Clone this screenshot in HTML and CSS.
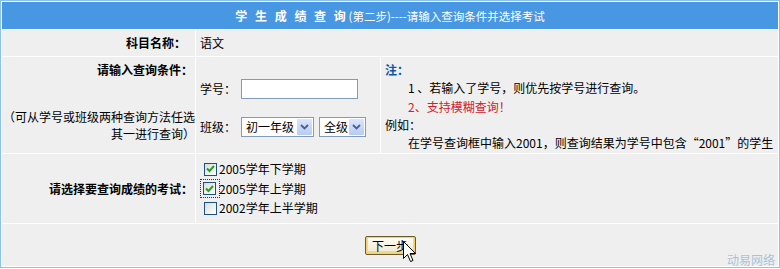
FILE: index.html
```html
<!DOCTYPE html>
<html lang="zh-CN">
<head>
  <meta charset="UTF-8">
  <title>学生成绩查询</title>
  <link rel="stylesheet" href="styles.css">
</head>
<body>
  <div class="page">
    <table class="query">
      <colgroup>
        <col class="col-label">
        <col class="col-fields">
        <col class="col-notes">
      </colgroup>
      <tr class="row-title">
        <th colspan="3"><b>学 生 成 绩 查 询</b> <span class="step">(第二步)----请输入查询条件并选择考试</span></th>
      </tr>
      <tr class="row-subject">
        <td class="label label-subject"><b>科目名称：</b></td>
        <td colspan="2" class="value">语文</td>
      </tr>
      <tr class="row-cond">
        <td class="label label-cond">
          <b>请输入查询条件：</b>
          <p class="hint">（可从学号或班级两种查询方法任选其一进行查询）</p>
        </td>
        <td class="fields">
          <div class="field">
            <span class="field-name">学号：</span>
            <input type="text" class="text-input">
          </div>
          <div class="field">
            <span class="field-name">班级：</span>
            <span class="select select-grade"><span class="select-text">初一年级</span><span class="select-btn"><svg width="9" height="6" viewBox="0 0 9 6"><path d="M1 1 L4.5 4.5 L8 1" fill="none" stroke="#4d6185" stroke-width="1.8"/></svg></span></span>
            <span class="select select-class"><span class="select-text">全级</span><span class="select-btn"><svg width="9" height="6" viewBox="0 0 9 6"><path d="M1 1 L4.5 4.5 L8 1" fill="none" stroke="#4d6185" stroke-width="1.8"/></svg></span></span>
          </div>
        </td>
        <td class="notes">
          <div class="note-head">注：</div>
          <div class="note-line">1 、若输入了学号，则优先按学号进行查询。</div>
          <div class="note-line note-red">2、支持模糊查询！</div>
          <div>例如：</div>
          <div class="note-line">在学号查询框中输入2001，则查询结果为学号中包含“2001”的学生</div>
        </td>
      </tr>
      <tr class="row-exam">
        <td class="label label-exam"><b>请选择要查询成绩的考试：</b></td>
        <td colspan="2" class="exams">
          <label class="exam"><span class="check checked"><svg width="9" height="8" viewBox="0 0 9 8"><path d="M1 3.5 L3.5 6 L8 1" fill="none" stroke="#21a121" stroke-width="2"/></svg></span>2005学年下学期</label>
          <label class="exam"><span class="focus"><span class="check checked"><svg width="9" height="8" viewBox="0 0 9 8"><path d="M1 3.5 L3.5 6 L8 1" fill="none" stroke="#21a121" stroke-width="2"/></svg></span></span>2005学年上学期</label>
          <label class="exam"><span class="check"></span>2002学年上半学期</label>
        </td>
      </tr>
      <tr class="row-submit">
        <td colspan="3"><button class="next-btn">下一步</button></td>
      </tr>
    </table>
    <span class="watermark">动易网络</span>
    <svg class="cursor" width="14" height="23" viewBox="0 0 14 23">
      <path d="M0.5 0.5 L0.5 17.5 L4.5 13.5 L7.5 20.5 L10 19.5 L7 12.5 L12.5 12.5 Z" fill="#fff" stroke="#000" stroke-width="1"/>
    </svg>
  </div>
</body>
</html>
```

FILE: styles.css
```css
body {
  margin: 0;
  font-family: "Noto Sans CJK SC", "DejaVu Sans", sans-serif;
  font-size: 12px;
  color: #000;
  background: #fff;
}

.page {
  position: relative;
  width: 780px;
  height: 269px;
  overflow: hidden;
}

.query {
  width: 780px;
  table-layout: fixed;
  border: 1px solid #8cc2e8;
  border-spacing: 1px;
  background: #fff;
}

.col-label { width: 193px; }
.col-fields { width: 184px; }
.col-notes { width: 397px; }

.query td {
  background: #efefef;
  padding: 0;
  vertical-align: middle;
  line-height: 18px;
}

.row-title { height: 27px; }
.row-subject { height: 26px; }
.row-cond { height: 96px; }
.row-exam { height: 69px; }
.row-submit { height: 42px; }

.row-title th {
  padding: 0;
  background: #4897e2;
  color: #fff;
  font-weight: normal;
  text-align: center;
  line-height: 18px;
}

.row-title b {
  word-spacing: 5px;
}

.step {
  font-size: 11.5px;
}

.row-cond td {
  vertical-align: top;
}

.row-submit td {
  text-align: center;
}

.query .label {
  text-align: right;
  padding-right: 2px;
}

.query .label-subject {
  padding-right: 9px;
}

.query .label-cond {
  padding-top: 4px;
}

.hint {
  margin: 29px -2px 0 0;
  line-height: 17px;
}

.query .value {
  padding-left: 4px;
}

.query .fields {
  padding: 22px 0 0 4px;
}

.field {
  display: flex;
  align-items: center;
  height: 20px;
}

.field + .field {
  margin-top: 18px;
}

.field-name {
  width: 41px;
}

.text-input {
  box-sizing: border-box;
  width: 117px;
  height: 20px;
  margin: 0;
  border: 1px solid #7f9db9;
  background: #fff;
  padding: 0 2px;
}

.select {
  display: flex;
  align-items: center;
  box-sizing: border-box;
  height: 20px;
  border: 1px solid #7f9db9;
  background: #fff;
  padding: 1px;
}

.select-grade { width: 73px; }
.select-class { width: 47px; margin-left: 5px; }

.select-text {
  flex: 1;
  padding-left: 3px;
}

.select-btn {
  display: flex;
  align-items: center;
  justify-content: center;
  width: 15px;
  height: 16px;
  background: linear-gradient(#dbe6fd, #b7cbf6);
  border-radius: 1px;
}

.query .notes {
  padding: 4px 0 0 4px;
  line-height: 18.3px;
}

.note-head {
  color: #0b57a8;
  font-weight: bold;
}

.note-line {
  padding-left: 23px;
}

.note-red {
  color: #d3202c;
}

.query .exams {
  padding-left: 8px;
}

.exam {
  display: flex;
  align-items: center;
  height: 19.5px;
}

.check {
  display: inline-flex;
  align-items: center;
  justify-content: center;
  box-sizing: border-box;
  width: 13px;
  height: 13px;
  margin-right: 2px;
  border: 1px solid #1c5180;
  background: linear-gradient(135deg, #dcdcd7, #fff);
}

.focus {
  display: inline-flex;
  margin: 0 -1px 0 -4px;
  padding: 3px 2px 3px 3px;
  outline: 1px dotted #333;
  outline-offset: -1px;
}

.next-btn {
  width: 51px;
  height: 19px;
  padding: 0;
  font: inherit;
  color: #000;
  border: 1px solid #6d5b2a;
  border-radius: 2px;
  background: linear-gradient(#fffef6, #efe8cf);
  box-shadow: inset 0 0 0 1px #f5cf6b, inset 0 -1px 0 2px #f0d88f;
}

.watermark {
  position: absolute;
  right: 5px;
  bottom: 2px;
  color: #a9c2da;
  font-size: 12px;
  line-height: 14px;
}

.cursor {
  position: absolute;
  left: 403px;
  top: 241px;
}
```
